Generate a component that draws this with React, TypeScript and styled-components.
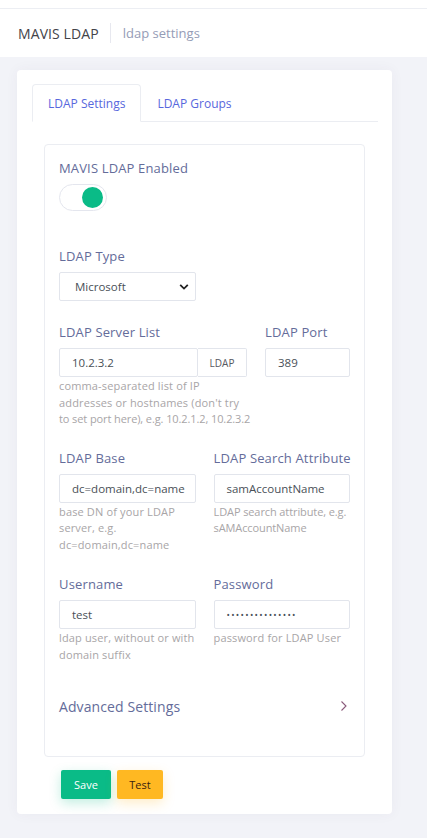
import React from "react";
import styled, { createGlobalStyle } from "styled-components";

const Global = createGlobalStyle`
  html, body { margin: 0; padding: 0; }
  body {
    background: #f2f3f8;
    font-family: "Open Sans", "Noto Sans", sans-serif;
    -webkit-font-smoothing: antialiased;
  }
  * { box-sizing: border-box; }
`;

const Page = styled.div`
  min-height: 838px;
  background: #f2f3f8;
`;

const TopStrip = styled.div`
  height: 9px;
  background: #fff;
  border-bottom: 1px solid #eceef3;
`;

const Subheader = styled.div`
  height: 48px;
  background: #fff;
  display: flex;
  align-items: center;
  padding-left: 18px;
`;

const Title = styled.h3`
  margin: 0;
  font-size: 14px;
  font-weight: 500;
  color: #434349;
  letter-spacing: 0.1px;
`;

const Divider = styled.span`
  width: 1px;
  height: 20px;
  background: #e7e8ef;
  margin: 0 12px 0 11px;
`;

const Crumb = styled.span`
  font-size: 13px;
  color: #959cb6;
`;

const Content = styled.div`
  padding: 13px 35px 0 17px;
`;

const Card = styled.div`
  background: #fff;
  border-radius: 4px;
  box-shadow: 0 0 13px 0 rgba(82, 63, 105, 0.05);
  padding: 14px 14px 15px 15px;
`;

const TabBar = styled.div`
  display: flex;
  border-bottom: 1px solid #ebedf2;
  height: 38px;
`;

const Tab = styled.div<{ $active?: boolean }>`
  height: 38px;
  padding: 0 15px;
  display: flex;
  align-items: center;
  white-space: nowrap;
  font-size: 12px;
  color: #5867dd;
  border: 1px solid ${(p) => (p.$active ? "#ebedf2" : "transparent")};
  border-bottom: 1px solid ${(p) => (p.$active ? "#fff" : "transparent")};
  border-radius: 4px 4px 0 0;
  background: ${(p) => (p.$active ? "#fff" : "transparent")};
  margin-bottom: -1px;
`;

const TabBody = styled.div`
  padding: 22px 13px 0 12px;
`;

const Panel = styled.div`
  border: 1px solid #ebedf2;
  border-radius: 4px;
  padding: 14px 14px 40px 14px;
`;

const Group = styled.div<{ $mb?: number }>`
  margin-bottom: ${(p) => p.$mb ?? 0}px;
`;

const Row = styled.div<{ $mb?: number; $cols?: string }>`
  display: grid;
  grid-template-columns: ${(p) => p.$cols || "minmax(0, 1fr) minmax(0, 1fr)"};
  column-gap: 18px;
  margin-bottom: ${(p) => p.$mb ?? 0}px;
`;

const Col = styled.div`
  min-width: 0;
`;

const Label = styled.label`
  display: block;
  font-size: 13px;
  letter-spacing: 0.15px;
  color: #646c9a;
  line-height: 18px;
  margin-bottom: 7px;
  white-space: nowrap;
`;

const SwitchTrack = styled.span`
  display: flex;
  align-items: center;
  justify-content: flex-end;
  width: 48px;
  height: 27px;
  border-radius: 14px;
  border: 1px solid #e4e6ee;
  background: #fff;
  padding-right: 3px;
`;

const Knob = styled.span`
  width: 21px;
  height: 21px;
  border-radius: 50%;
  background: #0abb87;
`;

const Select = styled.div`
  width: 137px;
  height: 29px;
  border: 1px solid #e2e5ec;
  border-radius: 2px;
  display: flex;
  align-items: center;
  justify-content: space-between;
  padding: 0 6px 0 15px;
  font-size: 11.5px;
  color: #495057;
`;

const InputGroup = styled.div`
  display: flex;
`;

const Input = styled.div`
  height: 29px;
  width: 100%;
  min-width: 0;
  border: 1px solid #e2e5ec;
  border-radius: 2px;
  display: flex;
  align-items: center;
  padding: 0 12px;
  font-size: 11.5px;
  color: #495057;
  white-space: nowrap;
  overflow: hidden;
`;

const Addon = styled.div`
  flex: 0 0 49px;
  height: 29px;
  border: 1px solid #e2e5ec;
  border-left: none;
  border-radius: 0 2px 2px 0;
  display: flex;
  align-items: center;
  justify-content: center;
  font-size: 10px;
  color: #575962;
  background: #fff;
`;

const Help = styled.div<{ $tight?: boolean }>`
  margin-top: 1px;
  font-size: 11px;
  letter-spacing: ${(p) => (p.$tight ? "-0.1px" : "0.15px")};
  line-height: 16.5px;
  color: #a8a5a7;
`;

const NoWrap = styled.span`
  white-space: nowrap;
  letter-spacing: -0.1px;
`;

const Dots = styled.span`
  font-size: 9px;
  letter-spacing: 1.3px;
  color: #495057;
`;

const Advanced = styled.div`
  display: flex;
  justify-content: space-between;
  align-items: center;
  height: 20px;
  font-size: 14px;
  letter-spacing: 0.1px;
  color: #646c9a;
  padding-right: 2px;
`;

const Actions = styled.div`
  display: flex;
  gap: 6px;
  padding: 13px 0 0 29px;
`;

const Button = styled.button<{ $variant: "save" | "test" }>`
  height: 29px;
  border: none;
  border-radius: 2px;
  padding: 0;
  width: ${(p) => (p.$variant === "save" ? "50px" : "46px")};
  font-family: inherit;
  font-size: 11px;
  background: ${(p) => (p.$variant === "save" ? "#0abb87" : "#ffb822")};
  color: ${(p) => (p.$variant === "save" ? "#fff" : "#3b1d10")};
  box-shadow: ${(p) =>
    p.$variant === "save"
      ? "0 4px 12px 0 rgba(10,187,135,0.25)"
      : "0 4px 12px 0 rgba(255,184,34,0.25)"};
`;

const Chevron = () => (
  <svg width="8" height="12" viewBox="0 0 8 12" fill="none">
    <path d="M1.5 1.5 L6 6 L1.5 10.5" stroke="#8a5a7a" strokeWidth="1.1" />
  </svg>
);

const SelectArrow = () => (
  <svg width="10" height="8" viewBox="0 0 10 8">
    <path d="M1.2 1.8 L5 5.6 L8.8 1.8" stroke="#222" strokeWidth="1.8" fill="none" />
  </svg>
);

export default function App() {
  return (
    <Page>
      <Global />
      <TopStrip />
      <Subheader>
        <Title>MAVIS LDAP</Title>
        <Divider />
        <Crumb>ldap settings</Crumb>
      </Subheader>
      <Content>
        <Card>
          <TabBar>
            <Tab $active>LDAP Settings</Tab>
            <Tab>LDAP Groups</Tab>
          </TabBar>
          <TabBody>
            <Panel>
              <Group $mb={36}>
                <Label>MAVIS LDAP Enabled</Label>
                <SwitchTrack>
                  <Knob />
                </SwitchTrack>
              </Group>
              <Group $mb={22}>
                <Label>LDAP Type</Label>
                <Select>
                  Microsoft
                  <SelectArrow />
                </Select>
              </Group>
              <Row $mb={21} $cols="188px minmax(0, 1fr)">
                <Col>
                  <Label>LDAP Server List</Label>
                  <InputGroup>
                    <Input>10.2.3.2</Input>
                    <Addon>LDAP</Addon>
                  </InputGroup>
                  <Help>
                    comma-separated list of IP addresses or hostnames (don't try{" "}
                    <NoWrap>to set port here), e.g. 10.2.1.2, 10.2.3.2</NoWrap>
                  </Help>
                </Col>
                <Col>
                  <Label>LDAP Port</Label>
                  <Input>389</Input>
                </Col>
              </Row>
              <Row $mb={22}>
                <Col>
                  <Label>LDAP Base</Label>
                  <Input>dc=domain,dc=name</Input>
                  <Help>
                    base DN of your LDAP server, e.g. dc=domain,dc=name
                  </Help>
                </Col>
                <Col>
                  <Label>LDAP Search Attribute</Label>
                  <Input>samAccountName</Input>
                  <Help $tight>LDAP search attribute, e.g. sAMAccountName</Help>
                </Col>
              </Row>
              <Row $mb={33}>
                <Col>
                  <Label>Username</Label>
                  <Input>test</Input>
                  <Help>ldap user, without or with domain suffix</Help>
                </Col>
                <Col>
                  <Label>Password</Label>
                  <Input>
                    <Dots>•••••••••••••••</Dots>
                  </Input>
                  <Help>password for LDAP User</Help>
                </Col>
              </Row>
              <Advanced>
                Advanced Settings
                <Chevron />
              </Advanced>
            </Panel>
          </TabBody>
          <Actions>
            <Button $variant="save">Save</Button>
            <Button $variant="test">Test</Button>
          </Actions>
        </Card>
      </Content>
    </Page>
  );
}
